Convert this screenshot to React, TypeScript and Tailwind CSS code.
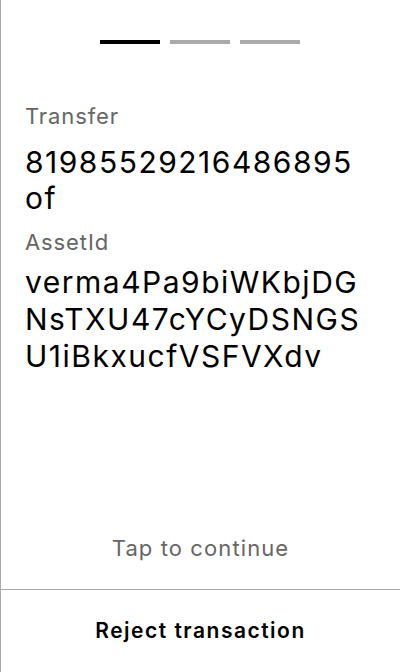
export default function App() {
  return (
    <div
      className="w-[400px] h-[672px] flex flex-col bg-white border-l border-[#aaaaaa] text-black select-none"
      style={{ fontFamily: 'Inter, "Noto Sans", sans-serif' }}
    >
      {/* Step indicator */}
      <div className="flex justify-center gap-[10px] pt-[40px] pr-px">
        <div className="w-[60px] h-[4px] bg-black" />
        <div className="w-[60px] h-[4px] bg-[#aaaaaa]" />
        <div className="w-[60px] h-[4px] bg-[#aaaaaa]" />
      </div>

      {/* Details */}
      <div className="flex-1 flex flex-col pl-[24px] pt-[58px]">
        <div className="text-[22px] leading-[28px] tracking-[0.9px] text-[#666666]">Transfer</div>
        <div className="text-[30px] leading-[36px] tracking-[1.5px] mt-[14px]">81985529216486895</div>
        <div className="text-[30px] leading-[36px] tracking-[1.5px]">of</div>
        <div className="text-[22px] leading-[28px] tracking-[0.9px] text-[#666666] mt-[12px]">AssetId</div>
        <div className="text-[30px] leading-[37px] tracking-[1.5px] mt-[8px] break-all w-[345px]">
          verma4Pa9biWKbjDGNsTXU47cYCyDSNGSU1iBkxucfVSFVXdv
        </div>
      </div>

      {/* Continue hint */}
      <div className="text-center text-[22px] leading-[28px] tracking-[1.1px] text-[#666666] pb-[27px]">
        Tap to continue
      </div>

      {/* Reject */}
      <button className="h-[83px] border-t border-[#aaaaaa] flex items-center justify-center text-[21px] tracking-[1.5px] font-semibold">
        Reject transaction
      </button>
    </div>
  )
}
